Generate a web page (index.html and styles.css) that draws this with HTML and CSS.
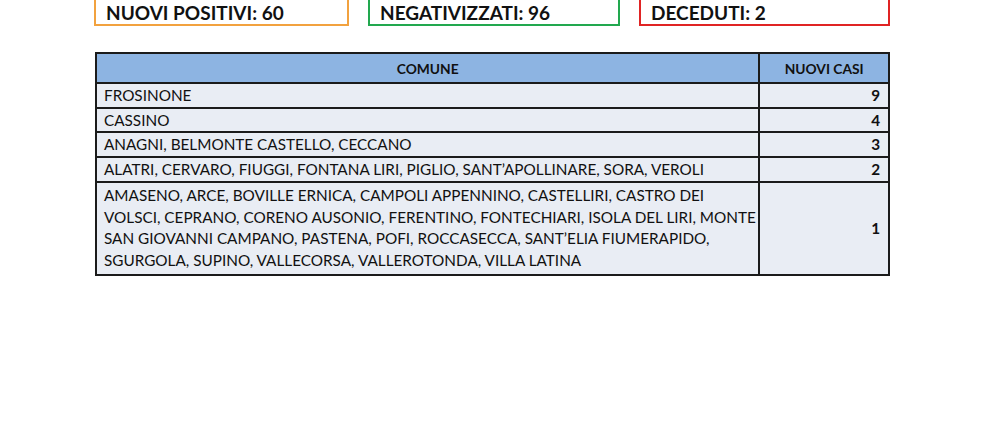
FILE: index.html
```html
<!DOCTYPE html>
<html lang="it">
<head>
<meta charset="utf-8">
<title>Nuovi casi</title>
<link rel="stylesheet" href="styles.css">
</head>
<body>
<div class="page">
  <div class="stats">
    <div class="stat stat-orange">NUOVI POSITIVI: 60</div>
    <div class="stat stat-green">NEGATIVIZZATI: 96</div>
    <div class="stat stat-red">DECEDUTI: 2</div>
  </div>
  <table class="cases">
    <thead>
      <tr><th class="col-comune">COMUNE</th><th class="col-casi">NUOVI CASI</th></tr>
    </thead>
    <tbody>
      <tr class="row"><td class="name">FROSINONE</td><td class="num">9</td></tr>
      <tr class="row"><td class="name">CASSINO</td><td class="num">4</td></tr>
      <tr class="row"><td class="name">ANAGNI, BELMONTE CASTELLO, CECCANO</td><td class="num">3</td></tr>
      <tr class="row"><td class="name">ALATRI, CERVARO, FIUGGI, FONTANA LIRI, PIGLIO, SANT’APOLLINARE, SORA, VEROLI</td><td class="num">2</td></tr>
      <tr class="row multi"><td class="name">AMASENO, ARCE, BOVILLE ERNICA, CAMPOLI APPENNINO, CASTELLIRI, CASTRO DEI VOLSCI, CEPRANO, CORENO AUSONIO, FERENTINO, FONTECHIARI, ISOLA DEL LIRI, MONTE SAN GIOVANNI CAMPANO, PASTENA, POFI, ROCCASECCA, SANT’ELIA FIUMERAPIDO, SGURGOLA, SUPINO, VALLECORSA, VALLEROTONDA, VILLA LATINA</td><td class="num">1</td></tr>
    </tbody>
  </table>
</div>
</body>
</html>
```
FILE: styles.css
```css
html, body {
  margin: 0;
  padding: 0;
  background: #ffffff;
}
body {
  font-family: "Lato", "Open Sans", sans-serif;
  color: #111111;
  width: 990px;
  height: 440px;
  overflow: hidden;
}
.page {
  padding-left: 94px;
}
.stats {
  display: flex;
  gap: 19px;
  margin-top: -12px;
}
.stat {
  box-sizing: border-box;
  width: 252px;
  height: 38px;
  border: 2px solid;
  padding: 13px 0 0 10px;
  font-weight: 700;
  font-size: 19px;
  line-height: 19px;
  white-space: nowrap;
}
.stat-orange { border-color: #f2a23f; width: 255px; }
.stat-green { border-color: #22a84f; }
.stat-red { border-color: #e02424; width: 251px; }

.cases {
  margin-top: 26px;
  margin-left: 1px;
  width: 795px;
  border-collapse: collapse;
  border: 2px solid #1b1b1b;
  font-size: 15.3px;
}
.cases th, .cases td {
  border: 2px solid #1b1b1b;
  padding: 0 7px;
}
.cases th {
  background: #8db4e2;
  font-weight: 700;
  font-size: 13.8px;
  height: 28px;
  text-align: center;
}
.col-comune { width: 650px; }
.col-casi { width: 114px; }
.cases td {
  background: #e9edf4;
  height: 22.7px;
  line-height: 22.7px;
}
.cases .name {
  padding-right: 0;
}
.cases .num {
  text-align: right;
  font-weight: 700;
  padding-right: 8px;
}
.multi td {
  line-height: 21.8px;
  padding-top: 2px;
  padding-bottom: 2px;
}
```
